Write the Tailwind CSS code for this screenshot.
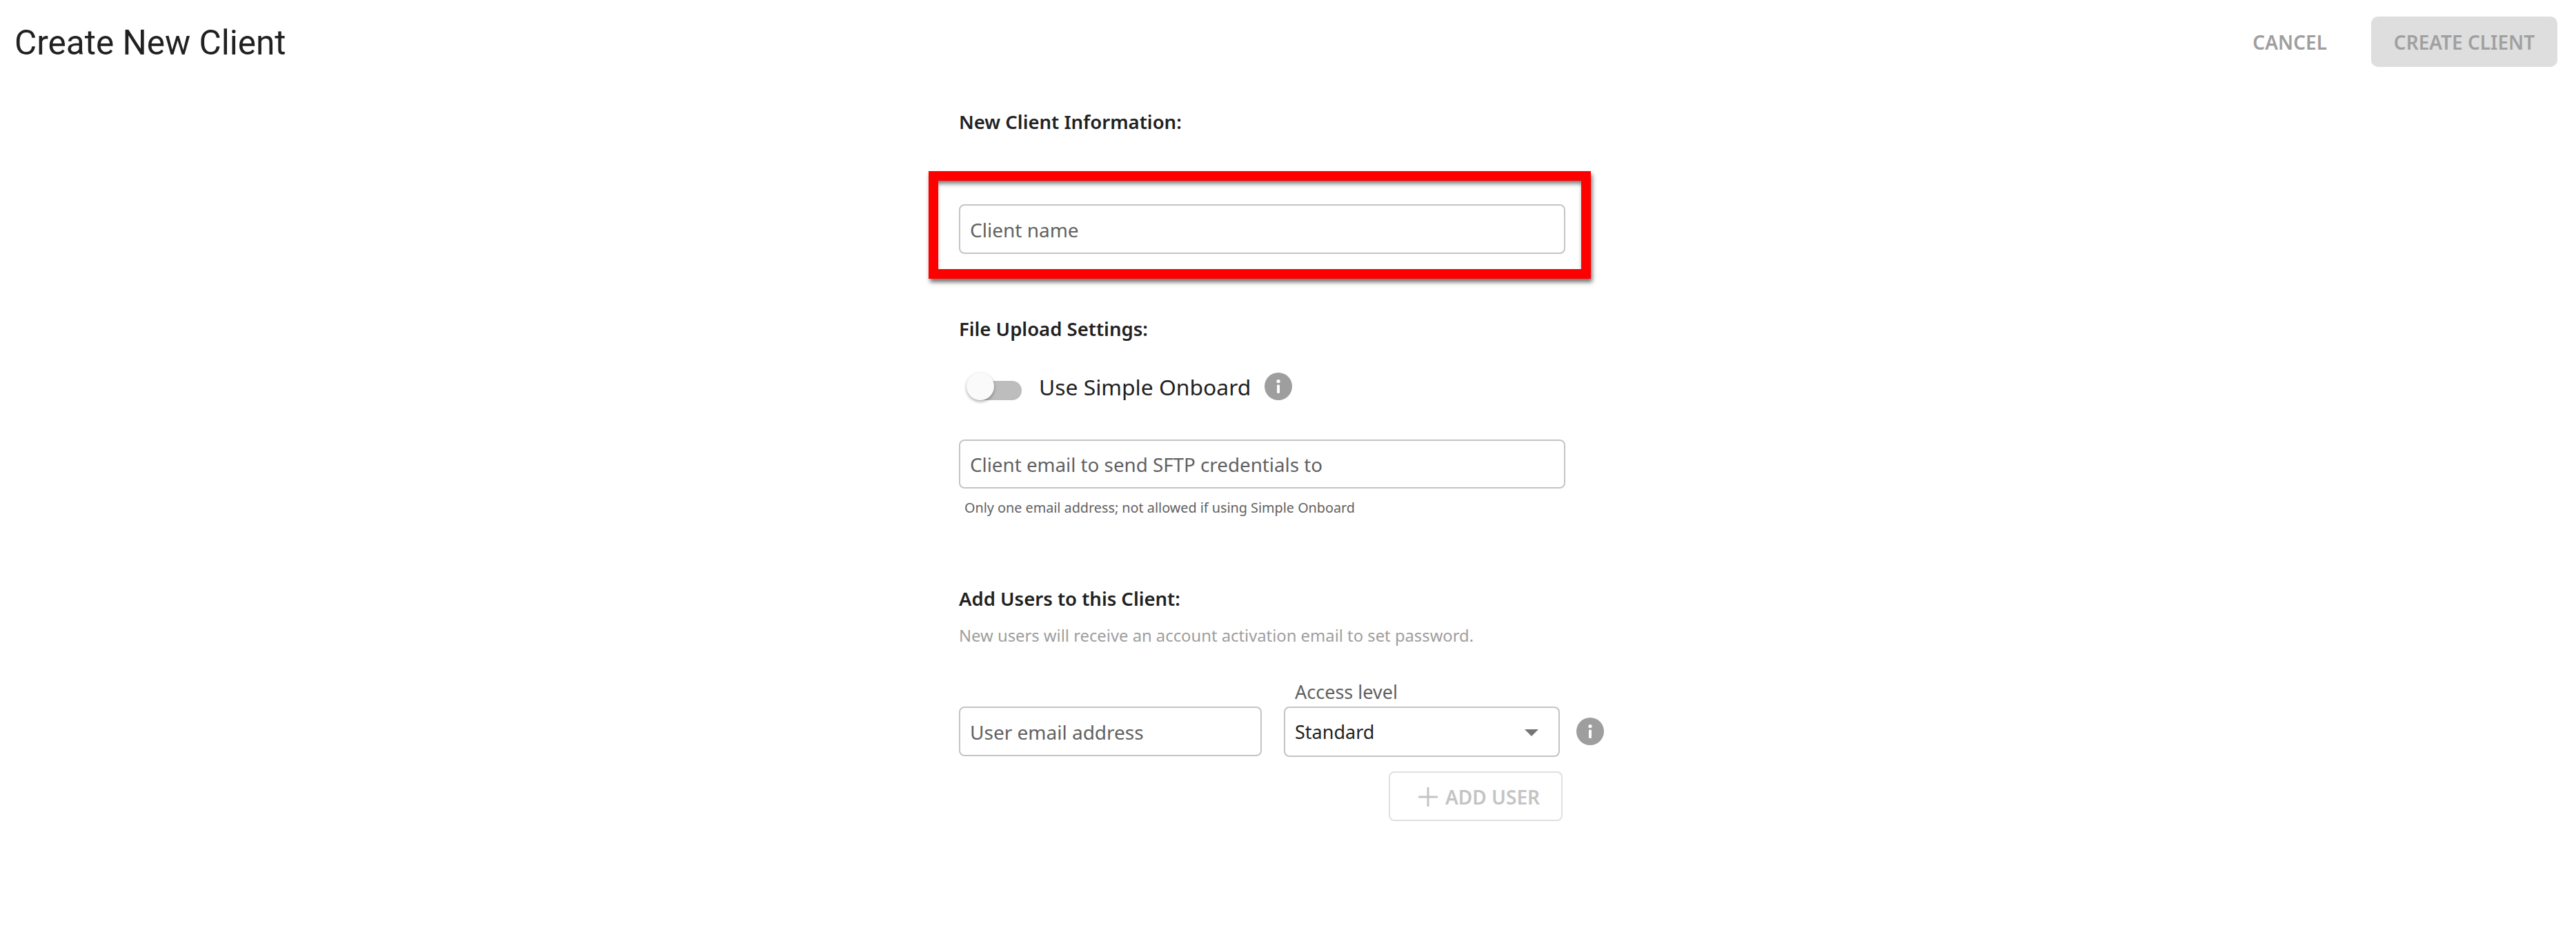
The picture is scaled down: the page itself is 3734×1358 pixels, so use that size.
<!DOCTYPE html>
<html lang="en">
  <head>
    <meta charset="UTF-8" />
    <title>Create New Client</title>
    <script src="https://cdn.jsdelivr.net/npm/@tailwindcss/browser@4"></script>
  </head>
  <body class="bg-white text-[#212121] font-['Noto_Sans',sans-serif]">
    <!-- header -->
    <div class="flex justify-between h-[157px] pt-[24px] pl-[21px] pr-[27px]">
      <h1 class="h-[73px] pt-[2px] leading-[73px] text-[49.5px] font-['Roboto',sans-serif]">Create New Client</h1>
      <div class="flex items-start">
        <button class="h-[73px] text-[28px] font-semibold text-[#9e9e9e] mr-[64px]">CANCEL</button>
        <button class="w-[270px] h-[73px] rounded-[10px] bg-[#dedede] text-[28px] font-semibold text-[#a0a0a0]">CREATE CLIENT</button>
      </div>
    </div>

    <div class="w-[960px] ml-[1346px]">
      <h2 class="ml-[44px] h-[40px] leading-[40px] text-[27.5px] font-semibold">New Client Information:</h2>

      <!-- highlight box from the annotation -->
      <div class="mt-[51px] h-[156px] border-[14px] border-[#ff0000] pt-[34px] pl-[30px] shadow-[2px_5px_6px_rgba(0,0,0,0.55),inset_0_6px_6px_-2px_rgba(0,0,0,0.55)]">
        <input type="text" placeholder="Client name" class="block w-[879px] h-[72px] border-2 border-[#c4c4c4] rounded-[8px] px-[14px] pt-[2px] text-[28px] placeholder:text-[#616161] bg-white" />
      </div>

      <h2 class="mt-[53px] ml-[44px] h-[40px] leading-[40px] text-[27.5px] font-semibold">File Upload Settings:</h2>

      <div class="mt-[43px] ml-[55px] h-[40px] flex items-center">
        <div class="relative w-[80px] h-[28px] mt-[12px]">
          <div class="absolute right-0 top-0 w-[75px] h-[28px] rounded-full bg-[#bdbdbd]"></div>
          <div class="absolute left-0 top-[-12px] w-[40px] h-[40px] rounded-full bg-[#fafafa] shadow-[0_2px_4px_rgba(0,0,0,0.35)]"></div>
        </div>
        <span class="ml-[25px] pt-[2px] text-[31.8px] leading-[40px]">Use Simple Onboard</span>
        <svg class="ml-[20px] w-[40px] h-[40px] shrink-0" viewBox="0 0 40 40">
          <circle cx="20" cy="20" r="20" fill="#9e9e9e" />
          <circle cx="20" cy="12.5" r="2.6" fill="#fff" />
          <rect x="18" y="17.5" width="4" height="12.5" rx="1.6" fill="#fff" />
        </svg>
      </div>

      <input type="text" placeholder="Client email to send SFTP credentials to" class="block mt-[57px] ml-[44px] w-[879px] h-[71px] border-2 border-[#c4c4c4] rounded-[8px] px-[14px] text-[27.75px] placeholder:text-[#616161] bg-white" />
      <p class="mt-[16px] ml-[52px] h-[24px] leading-[24px] text-[19.8px] text-[#616161]">Only one email address; not allowed if using Simple Onboard</p>

      <h2 class="mt-[100px] ml-[44px] h-[40px] leading-[40px] text-[27.5px] font-semibold">Add Users to this Client:</h2>
      <p class="mt-[19px] ml-[44px] h-[28px] leading-[28px] text-[23.8px] text-[#9e9e9e]">New users will receive an account activation email to set password.</p>

      <div class="mt-[54px] ml-[44px] flex items-end">
        <input type="text" placeholder="User email address" class="block shrink-0 w-[439px] h-[72px] mb-[1px] border-2 border-[#c4c4c4] rounded-[8px] px-[14px] pt-[2px] text-[28px] placeholder:text-[#616161] bg-white" />
        <div class="ml-[32px] shrink-0">
          <div class="ml-[16px] h-[28px] leading-[28px] mb-[7px] text-[27px] text-[#616161]">Access level</div>
          <div class="w-[400px] h-[73px] border-2 border-[#c4c4c4] rounded-[8px] pl-[14px] pr-[29px] pt-[2px] flex items-center justify-between text-[27px]">
            <span>Standard</span>
            <svg class="w-[20px] h-[10px]" viewBox="0 0 20 10"><path d="M0 0h20L10 10z" fill="#757575" /></svg>
          </div>
        </div>
        <svg class="ml-[24px] mb-[17px] w-[40px] h-[40px] shrink-0" viewBox="0 0 40 40">
          <circle cx="20" cy="20" r="20" fill="#9e9e9e" />
          <circle cx="20" cy="12.5" r="2.6" fill="#fff" />
          <rect x="18" y="17.5" width="4" height="12.5" rx="1.6" fill="#fff" />
        </svg>
      </div>

      <button class="flex items-center mt-[21px] ml-[667px] w-[252px] h-[72px] border-2 border-[#e0e0e0] rounded-[8px] pl-[41px] pt-[2px] text-[28px] font-semibold text-[#c4c4c4]">
        <svg class="w-[28px] h-[28px] mr-[11px]" viewBox="0 0 28 28"><path d="M14 1v26M1 14h26" stroke="#c4c4c4" stroke-width="3" stroke-linecap="round" fill="none" /></svg>
        ADD USER
      </button>
    </div>
  </body>
</html>
